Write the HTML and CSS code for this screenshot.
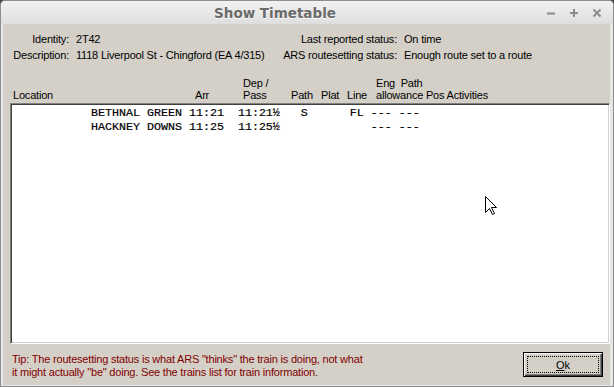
FILE: index.html
```html
<!DOCTYPE html>
<html>
<head>
<meta charset="utf-8">
<link rel="stylesheet" href="styles.css">
</head>
<body>
<div class="window">
  <div class="titlebar">
    <div class="title">Show Timetable</div>
    <div class="controls">
      <svg class="ctl" width="10" height="10" viewBox="0 0 10 10"><path d="M1 5.5H9" /></svg>
      <svg class="ctl" width="10" height="10" viewBox="0 0 10 10"><path d="M1 5H9M5 1V9" /></svg>
      <svg class="ctl" width="10" height="10" viewBox="0 0 10 10"><path d="M1.5 1.5L8.5 8.5M8.5 1.5L1.5 8.5" /></svg>
    </div>
  </div>
  <div class="frame">
    <div class="content">
      <div class="info">
        <div class="lbl">Identity:</div>
        <div class="val">2T42</div>
        <div class="lbl">Last reported status:</div>
        <div class="val">On time</div>
        <div class="lbl">Description:</div>
        <div class="val">1118 Liverpool St - Chingford (EA 4/315)</div>
        <div class="lbl">ARS routesetting status:</div>
        <div class="val">Enough route set to a route</div>
      </div>
      <div class="headers">
        <div class="hcell c-loc"><span></span><span>Location</span></div>
        <div class="hcell c-arr"><span></span><span>Arr</span></div>
        <div class="hcell c-dep"><span>Dep /</span><span>Pass</span></div>
        <div class="hcell c-path"><span></span><span>Path</span></div>
        <div class="hcell c-plat"><span></span><span>Plat</span></div>
        <div class="hcell c-line"><span></span><span>Line</span></div>
        <div class="hcell c-rest"><span>Eng  Path</span><span>allowance Pos Activities</span></div>
      </div>
      <div class="listbox">
<pre class="rows">BETHNAL GREEN 11:21  11:21½   S      FL --- ---
HACKNEY DOWNS 11:25  11:25½             --- ---</pre>
      </div>
      <div class="footer">
        <p class="tip">Tip: The routesetting status is what ARS "thinks" the train is doing, not what<br>it might actually "be" doing. See the trains list for train information.</p>
        <button class="ok"><span class="focus"><u>O</u>k</span></button>
      </div>
    </div>
  </div>
  <svg class="cursor" width="13" height="20" viewBox="0 0 13 20"><path d="M0.5 0.5V16.5L4.5 12.5L7.5 18.5L9.5 17.5L6.5 11.5H11.5Z" fill="#fff" stroke="#000" stroke-width="1" stroke-linejoin="miter"/></svg>
</div>
</body>
</html>
```
FILE: styles.css
```css
html, body {
  margin: 0;
  padding: 0;
  background: #4a4a4a;
}
.window {
  position: relative;
  width: 614px;
  height: 387px;
  box-sizing: border-box;
  border: 1px solid #8e8e8e;
  border-radius: 5px 5px 0 0;
  background: #e6e6e6;
  overflow: hidden;
  font-family: "Liberation Sans", Arial, sans-serif;
  font-size: 11px;
  letter-spacing: -0.2px;
  color: #000;
}
.titlebar {
  height: 23px;
  display: flex;
  align-items: center;
  background: linear-gradient(#f2f2f2, #dedede);
}
.title {
  width: 548px;
  text-align: center;
  font-family: "DejaVu Sans", sans-serif;
  font-weight: bold;
  font-size: 13.5px;
  letter-spacing: 0;
  color: #6a6a6a;
  text-shadow: 0 1px #fafafa;
}
.controls {
  flex: 1;
  display: flex;
  align-items: center;
  gap: 13px;
  margin-left: -3px;
}
.ctl path {
  stroke: #8c8c8c;
  stroke-width: 2;
  fill: none;
}
.frame {
  padding: 0 3px 1px 2px;
  height: 362px;
  box-sizing: border-box;
}
.content {
  background: #d4d0c8;
  height: 361px;
  display: flex;
  flex-direction: column;
}
.info {
  display: grid;
  grid-template-columns: 66px 211px 117px auto;
  grid-auto-rows: 16px;
  padding-top: 7px;
  line-height: 16px;
}
.info .lbl {
  text-align: right;
  white-space: nowrap;
}
.info .val {
  padding-left: 7px;
  white-space: nowrap;
}
.headers {
  display: flex;
  margin-top: 14px;
  padding-left: 10px;
  line-height: 12px;
  height: 24px;
}
.hcell {
  display: flex;
  flex-direction: column;
  white-space: pre;
}
.hcell span {
  height: 12px;
}
.c-loc { width: 182px; }
.c-arr { width: 48px; }
.c-dep { width: 48px; }
.c-path { width: 30px; }
.c-plat { width: 26px; }
.c-line { width: 29px; }
.listbox {
  margin: 2px 0 0 7px;
  height: 241px;
  box-sizing: border-box;
  background: #fff;
  border: 1px solid;
  border-color: #808080 #ffffff #ffffff #808080;
  box-shadow: inset 1px 1px #404040, inset -1px -1px #d4d0c8;
}
.rows {
  margin: 0;
  padding: 2px 0 0 80px;
  font-family: "Liberation Mono", "Courier New", monospace;
  font-size: 11.667px;
  letter-spacing: 0;
  line-height: 14px;
  color: #000;
  -webkit-text-stroke: 0.2px #000;
}
.footer {
  display: flex;
  align-items: flex-start;
  padding: 8px 7px 0 9px;
}
.tip {
  margin: 0;
  padding-top: 1px;
  line-height: 13px;
  color: #800000;
}
.ok {
  margin-left: auto;
  width: 80px;
  height: 25px;
  padding: 0;
  background: #d4d0c8;
  border: 1px solid #000;
  box-shadow: inset 1px 1px #ffffff, inset -1px -1px #404040, inset -2px -2px #808080;
  font-family: "Liberation Sans", Arial, sans-serif;
  font-size: 11px;
  color: #000;
  display: flex;
  align-items: stretch;
  justify-content: stretch;
}
.focus {
  flex: 1;
  margin: 3px;
  border: 1px dotted #000;
  display: flex;
  align-items: center;
  justify-content: center;
}
.cursor {
  position: absolute;
  left: 484px;
  top: 195px;
}
```
